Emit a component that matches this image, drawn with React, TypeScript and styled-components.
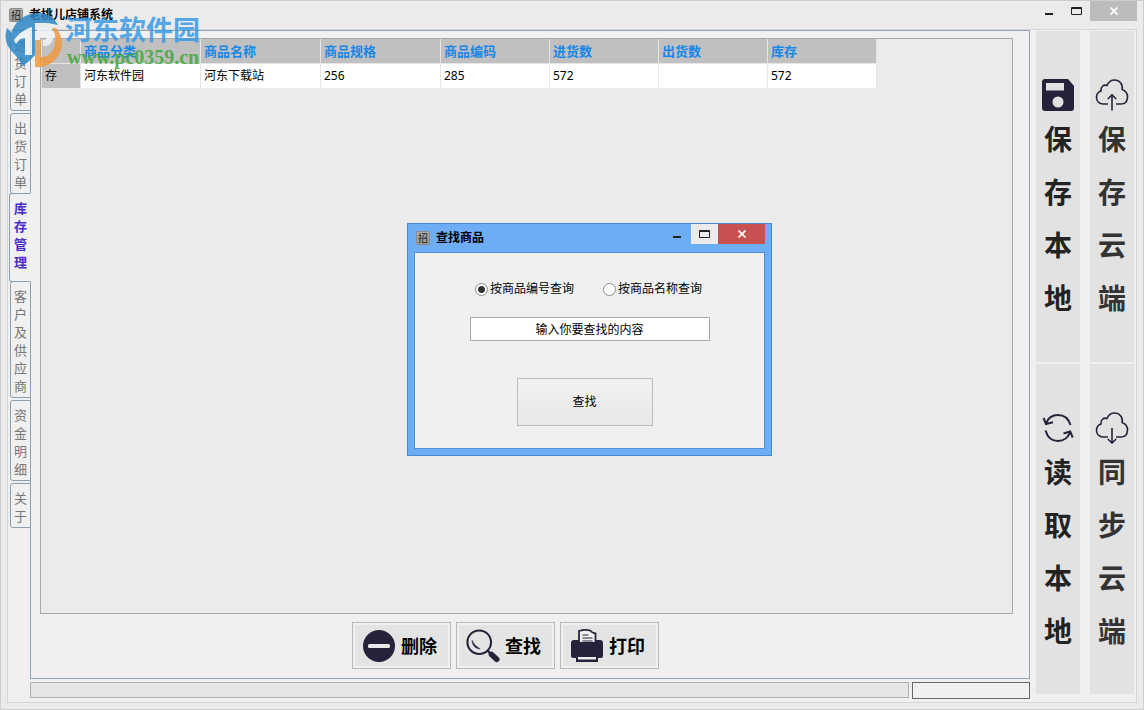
import React, { useState } from 'react';
import styled, { createGlobalStyle, css } from 'styled-components';

const GlobalStyle = createGlobalStyle`
  *, *::before, *::after { box-sizing: border-box; }
  html, body, #root { height: 100%; margin: 0; }
  body {
    background: #ebebeb;
    color: #000;
    font: 12px/18px "Noto Sans", "Noto Sans CJK SC", sans-serif;
  }
  button, input { font: inherit; color: inherit; margin: 0; padding: 0; border: 0; }
`;

const AppWindow = styled.div`
  position: relative;
  display: flex;
  flex-direction: column;
  min-height: 100%;
  border: 1px solid #cdcdcd;
  padding: 0 6px 6px;
  background: #ebebeb;
`;

const TitleBar = styled.header`
  display: flex;
  justify-content: space-between;
  height: 28px;
  padding-left: 2px;
`;

const TitleText = styled.h1`
  display: flex;
  align-items: center;
  gap: 6px;
  margin: 0;
  font-size: 12px;
  font-weight: 700;
`;

const AppBadge = styled.span`
  display: grid;
  place-items: center;
  width: 14px;
  height: 14px;
  border: 1px solid #8c8c8c;
  border-radius: 2px;
  background: linear-gradient(#b4b0aa, #989898);
  color: #222;
  font-size: 10px;
  line-height: 12px;
  font-weight: 400;
`;

const WindowControls = styled.div`
  display: flex;
  align-items: flex-start;
`;

const ControlButton = styled.button<{ $tone?: 'grey' | 'red' | 'light' }>`
  display: grid;
  place-items: center;
  width: ${p => (p.$tone === 'grey' || p.$tone === 'red' ? 47 : 27)}px;
  height: 20px;
  background: ${p =>
    p.$tone === 'grey' ? '#bcbcbc' : p.$tone === 'red' ? '#c75050' : p.$tone === 'light' ? '#ebebeb' : 'transparent'};
`;

const Client = styled.div`
  flex: 1;
  display: flex;
  gap: 6px;
  border: 1px solid #d6d6d6;
  background: #f0f0f0;
  padding: 0 2px 3px 0;
`;

const Workspace = styled.div`
  flex: 1;
  display: flex;
  flex-direction: column;
  gap: 3px;
  min-width: 0;
`;

const TabbedArea = styled.div`
  flex: 1;
  display: flex;
`;

const TabStrip = styled.nav`
  display: flex;
  flex-direction: column;
  align-items: flex-end;
  gap: 2px;
  width: 23px;
  margin-right: -1px;
  z-index: 1;
`;

const Tab = styled.button<{ $active?: boolean }>`
  width: 21px;
  padding: 5px 4px 2px 3px;
  border: 1px solid #8aa0b0;
  border-radius: 3px 0 0 3px;
  color: #777;
  font-size: 13px;
  line-height: 18px;
  word-break: break-all;
  background: #f0f0f0;
  ${p =>
    p.$active &&
    css`
      z-index: 1;
      width: 22px;
      margin: -3px 0;
      padding: 5px 4px 10px;
      border-right-color: #f0f0f0;
      color: #4a2cc4;
      font-weight: 700;
    `}
`;

const Panel = styled.main`
  flex: 1;
  display: flex;
  flex-direction: column;
  border: 1px solid #95a2b1;
  padding: 7px 16px 9px 9px;
  min-width: 0;
`;

const GridFrame = styled.section`
  flex: 1;
  border: 1px solid #a8a8a8;
  background: #ebebeb;
`;

const StockTable = styled.table`
  table-layout: fixed;
  width: 836px;
  border-collapse: separate;
  border-spacing: 0;
  border-left: 1px solid #e6e6e6;
  th, td {
    height: 24px;
    padding: 0 3px;
    border-right: 1px solid #e6e6e6;
    text-align: left;
    line-height: 18px;
    white-space: nowrap;
  }
  thead th {
    height: 25px;
    background: #c0c0c0;
    border-bottom: 1px solid #e6e6e6;
    color: #1787e8;
    font-size: 13px;
    font-weight: 700;
  }
  tbody th { background: #c0c0c0; font-weight: 400; }
  td { background: #fff; }
`;

const Actions = styled.div`
  display: flex;
  justify-content: center;
  gap: 5px;
  padding: 8px 42px 0 0;
`;

const ActionButton = styled.button`
  display: flex;
  align-items: center;
  gap: 5px;
  width: 99px;
  height: 47px;
  padding-left: 9px;
  border: 1px solid #b9b9b9;
  background: #e4e4e4;
  box-shadow: inset 0 0 0 2px #f0f0f0;
  font-size: 18px;
  line-height: 24px;
  font-weight: 700;
  svg { flex: none; width: 34px; }
`;

const StatusRow = styled.footer`
  display: flex;
  gap: 3px;
  padding-left: 22px;
  height: 17px;
`;

const StatusTrack = styled.div`
  flex: 1;
  height: 16px;
  border: 1px solid #b0b0b0;
  background: #e6e6e6;
`;

const StatusBox = styled.div`
  width: 118px;
  border: 1px solid #686868;
  background: #f0f0f0;
`;

const SideBar = styled.aside`
  display: grid;
  grid-template-columns: 44px 44px;
  grid-template-rows: 1fr 1fr;
  column-gap: 10px;
  row-gap: 2px;
  padding: 1px 0 5px;
`;

const SideButton = styled.button<{ $soft?: boolean }>`
  display: flex;
  flex-direction: column;
  align-items: center;
  justify-content: flex-start;
  padding-top: 48px;
  background: #e2e2e2;
  color: ${p => (p.$soft ? '#333' : '#222')};
  font-size: 28px;
  line-height: 53px;
  font-weight: 700;
`;

const SideLabel = styled.span`
  width: 28px;
  margin-top: 2px;
  word-break: break-all;
`;

const Dialog = styled.div`
  position: absolute;
  left: 406px;
  top: 222px;
  display: flex;
  flex-direction: column;
  width: 365px;
  height: 233px;
  padding: 0 6px 6px;
  border: 1px solid #4a88d0;
  background: #6cadf6;
  z-index: 2;
`;

const SearchForm = styled.form`
  flex: 1;
  display: flex;
  flex-direction: column;
  align-items: center;
  padding: 27px 0 0;
  border: 1px solid #4f8fd8;
  background: #f0f0f0;
`;

const Choices = styled.div`
  display: flex;
  gap: 29px;
  padding-right: 2px;
`;

const Choice = styled.label`
  display: flex;
  align-items: center;
  gap: 2px;
`;

const Radio = styled.input`
  appearance: none;
  width: 13px;
  height: 13px;
  border: 1px solid #8c8c8c;
  border-radius: 50%;
  background: #fff;
  &:checked { background: radial-gradient(circle, #333 0 3px, #fff 4px); }
`;

const SearchInput = styled.input`
  width: 240px;
  height: 24px;
  margin-top: 19px;
  border: 1px solid #a9a9a9;
  background: #fff;
  text-align: center;
`;

const SearchButton = styled.button`
  width: 136px;
  height: 48px;
  margin: 37px 10px 0 0;
  border: 1px solid #bcbcbc;
  background: linear-gradient(#f2f2f2, #e8e8e8);
`;

const Watermark = styled.div`
  position: absolute;
  left: 3px;
  top: 8px;
  display: flex;
  opacity: 0.85;
  pointer-events: none;
  z-index: 3;
`;

const WatermarkText = styled.div`
  display: flex;
  flex-direction: column;
  padding-top: 6px;
`;

const WatermarkName = styled.span`
  color: #3a9be6;
  font-size: 27px;
  line-height: 30px;
  font-weight: 700;
`;

const WatermarkUrl = styled.span`
  padding-left: 2px;
  color: #43a83c;
  font: 700 20px/24px "Liberation Serif", serif;
`;

const INK = '#25233a';

const MinimizeIcon = () => (
  <svg width="10" height="10" aria-hidden="true"><path d="M0 7h8v2H0z" fill="#222" /></svg>
);
const MaximizeIcon = () => (
  <svg width="11" height="10" aria-hidden="true">
    <path d="M.5 1.5h10v7H.5zM.5 2.5h10" fill="none" stroke="#222" />
  </svg>
);
const CloseIcon = () => (
  <svg width="8" height="8" aria-hidden="true"><path d="M.5.5l7 7m0-7l-7 7" stroke="#fff" strokeWidth="1.6" /></svg>
);

const SaveIcon = () => (
  <svg width="32" height="32" viewBox="0 0 32 32" aria-hidden="true">
    <path fill={INK} fillRule="evenodd" d="M3 0h23l6 7v22q0 3-3 3H3q-3 0-3-3V3q0-3 3-3zM4 4v7.500h18V4zM16 17.500a5.500 5.500 0 100 11 5.500 5.500 0 000-11z" />
  </svg>
);
const CloudIcon = ({ down }: { down?: boolean }) => (
  <svg width="34" height="32" viewBox="0 2 34 32" fill="none" stroke={INK} strokeWidth="1.6" aria-hidden="true">
    <path d="M13 27H8C4 27 1.500 24 1.500 20.500C1.500 17 3.500 14.800 6 14C5.500 10 8.500 7.200 12 8.500C13.500 5 16 3 19.500 3C24.500 3 28 7 27.200 12.500C31 14 32.700 17 32.500 20.500C32.200 24.500 29.800 27 26 27H21" />
    {down ? <path d="M17 18v15M12.800 29L17 33l4.200-4" /> : <path d="M17 33.500V18M12.800 22L17 17.800l4.200 4.200" />}
  </svg>
);
const RefreshIcon = () => (
  <svg width="32" height="32" viewBox="0 0 32 32" fill="none" stroke={INK} strokeWidth="2" aria-hidden="true">
    <path d="M28.500 13C26.500 6.500 21.500 3 16 3C10.500 3 6 6 4 11.500M1.500 6l2.500 6 7-1.700" />
    <path d="M3.500 18.500C5.500 25.500 10.500 29 16 29C21.500 29 26 26 28.200 20M21.500 21.500l6.700-2 2.500 6" />
  </svg>
);
const DeleteIcon = () => (
  <svg width="34" height="34" viewBox="0 0 34 34" aria-hidden="true">
    <circle cx="17" cy="17" r="16" fill={INK} />
    <rect x="6" y="15" width="22" height="4" rx="1.500" fill="#e8e8e8" />
  </svg>
);
const FindIcon = () => (
  <svg width="34" height="36" viewBox="0 0 36 36" fill="none" stroke={INK} aria-hidden="true">
    <circle cx="14" cy="14" r="12.500" strokeWidth="2.200" />
    <path d="M6.500 12C6.500 17.500 10 21 15 21C11.500 19 8.500 17 6.500 12z" fill={INK} strokeWidth=".6" />
    <path d="M23 23l3 3" strokeWidth="2.500" />
    <path d="M27 27l5.500 5" strokeWidth="6" strokeLinecap="round" />
  </svg>
);
const PrintIcon = () => (
  <svg width="34" height="36" viewBox="0 0 34 36" aria-hidden="true">
    <path d="M4 12h26q3 0 3 3v13q0 2-2 2H3q-2 0-2-2V15q0-3 3-3z" fill={INK} />
    <path d="M9 15V3q6-2 11-.500q2 2.500 5.500 3V15z" fill="#f0f0f0" stroke={INK} strokeWidth="1.800" />
    <path d="M12.500 7h6m-6 3h10m-10 3h10" stroke={INK} strokeWidth="1" />
    <path d="M6 28v6h22v-6z" fill={INK} />
    <path d="M8 29h18v2.500H8z" fill="#eee" />
  </svg>
);
const WatermarkLogo = () => (
  <svg width="61" height="62" viewBox="0 0 61 62" aria-hidden="true">
    <path d="M8 24C10 12 22 4 34 4C43 4 50 8 54 16L44 14H31V46C27 51 22 55 17 58C18 50 8 45 4 37C1 31 1 25 3 19z" fill="#2f87c6" />
    <path d="M52 19C59 27 60 38 54 47C49 55 40 59 31 58V31H37V48C45 48 50 42 51 34C52 28 51 24 48 19z" fill="#f19a3e" />
    <path d="M10 31C15 24 21 20 28 18V46H21V29C17 29 14 31 12 35zM33 18H42C52 18 52 36 42 37H39V31C44 31 44 24 40 24H33z" fill="#eef3f7" />
  </svg>
);

const TABS = ['进货订单', '出货订单', '库存管理', '客户及供应商', '资金明细', '关于'];
const COLUMNS = [
  { title: '商品分类', width: 120, value: '河东软件园' },
  { title: '商品名称', width: 120, value: '河东下载站' },
  { title: '商品规格', width: 120, value: '256' },
  { title: '商品编码', width: 109, value: '285' },
  { title: '进货数', width: 109, value: '572' },
  { title: '出货数', width: 109, value: '' },
  { title: '库存', width: 109, value: '572' },
];
const ACTIONS = [
  { label: '删除', Icon: DeleteIcon },
  { label: '查找', Icon: FindIcon },
  { label: '打印', Icon: PrintIcon },
];

export default function App() {
  const [tab, setTab] = useState('库存管理');
  const [mode, setMode] = useState('code');
  const [query, setQuery] = useState('输入你要查找的内容');

  return (
    <>
      <GlobalStyle />
      <AppWindow>
        <TitleBar>
          <TitleText>
            <AppBadge>招</AppBadge>老桃儿店铺系统
          </TitleText>
          <WindowControls>
            <ControlButton aria-label="最小化"><MinimizeIcon /></ControlButton>
            <ControlButton aria-label="最大化"><MaximizeIcon /></ControlButton>
            <ControlButton $tone="grey" aria-label="关闭"><CloseIcon /></ControlButton>
          </WindowControls>
        </TitleBar>

        <Client>
          <Workspace>
            <TabbedArea>
              <TabStrip>
                {TABS.map(name => (
                  <Tab key={name} $active={name === tab} onClick={() => setTab(name)}>{name}</Tab>
                ))}
              </TabStrip>
              <Panel>
                <GridFrame>
                  <StockTable>
                    <colgroup>
                      <col width={39} />
                      {COLUMNS.map(c => <col key={c.title} width={c.width} />)}
                    </colgroup>
                    <thead>
                      <tr>
                        <th />
                        {COLUMNS.map(c => <th key={c.title} scope="col">{c.title}</th>)}
                      </tr>
                    </thead>
                    <tbody>
                      <tr>
                        <th scope="row">存</th>
                        {COLUMNS.map(c => <td key={c.title}>{c.value}</td>)}
                      </tr>
                    </tbody>
                  </StockTable>
                </GridFrame>
                <Actions>
                  {ACTIONS.map(({ label, Icon }) => (
                    <ActionButton key={label}><Icon />{label}</ActionButton>
                  ))}
                </Actions>
              </Panel>
            </TabbedArea>
            <StatusRow>
              <StatusTrack />
              <StatusBox />
            </StatusRow>
          </Workspace>
          <SideBar>
            <SideButton><SaveIcon /><SideLabel>保存本地</SideLabel></SideButton>
            <SideButton $soft><CloudIcon /><SideLabel>保存云端</SideLabel></SideButton>
            <SideButton><RefreshIcon /><SideLabel>读取本地</SideLabel></SideButton>
            <SideButton $soft><CloudIcon down /><SideLabel>同步云端</SideLabel></SideButton>
          </SideBar>
        </Client>

        <Dialog role="dialog" aria-label="查找商品">
          <TitleBar>
            <TitleText as="h2"><AppBadge>招</AppBadge>查找商品</TitleText>
            <WindowControls>
              <ControlButton aria-label="最小化"><MinimizeIcon /></ControlButton>
              <ControlButton $tone="light" aria-label="最大化"><MaximizeIcon /></ControlButton>
              <ControlButton $tone="red" aria-label="关闭"><CloseIcon /></ControlButton>
            </WindowControls>
          </TitleBar>
          <SearchForm onSubmit={e => e.preventDefault()}>
            <Choices>
              <Choice>
                <Radio type="radio" name="mode" checked={mode === 'code'} onChange={() => setMode('code')} />
                按商品编号查询
              </Choice>
              <Choice>
                <Radio type="radio" name="mode" checked={mode === 'name'} onChange={() => setMode('name')} />
                按商品名称查询
              </Choice>
            </Choices>
            <SearchInput aria-label="查找内容" value={query} onChange={e => setQuery(e.target.value)} />
            <SearchButton type="submit">查找</SearchButton>
          </SearchForm>
        </Dialog>

        <Watermark>
          <WatermarkLogo />
          <WatermarkText>
            <WatermarkName>河东软件园</WatermarkName>
            <WatermarkUrl>www.pc0359.cn</WatermarkUrl>
          </WatermarkText>
        </Watermark>
      </AppWindow>
    </>
  );
}
